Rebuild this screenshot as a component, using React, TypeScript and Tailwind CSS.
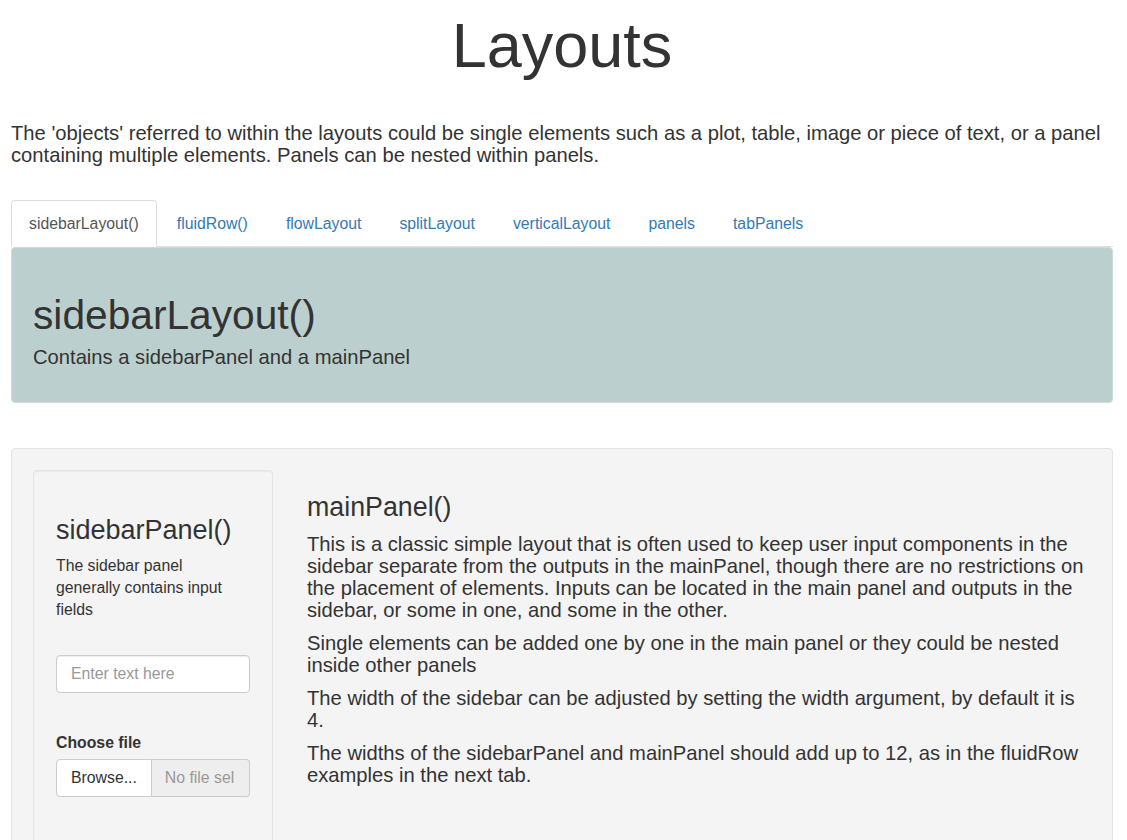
import { useState } from "react";

const TABS = [
  "sidebarLayout()",
  "fluidRow()",
  "flowLayout",
  "splitLayout",
  "verticalLayout",
  "panels",
  "tabPanels",
];

function Tabs({ active, onPick }: { active: number; onPick: (i: number) => void }) {
  return (
    <ul className="flex border-b border-[#ddd]">
      {TABS.map((t, i) => (
        <li key={t} className="-mb-px mr-[2px]">
          <button
            onClick={() => onPick(i)}
            className={`block px-[17px] pt-[12px] pb-[12px] text-[15.8px] leading-[21px] border rounded-t-[4px] ${
              i === active
                ? "bg-white text-[#555] border-[#ddd] border-b-white"
                : "text-[#337ab7] border-transparent hover:bg-[#eee]"
            }`}
          >
            {t}
          </button>
        </li>
      ))}
    </ul>
  );
}

function Sidebar() {
  return (
    <div className="w-[240px] shrink-0 bg-[#f4f4f4] border border-[#e3e3e3] rounded-[4px] px-[22px] pt-[44px] pb-[60px] shadow-[inset_0_1px_1px_rgba(0,0,0,0.05)]">
      <h3 className="text-[27px] leading-[30px]">sidebarPanel()</h3>
      <p className="mt-[10px] text-[15.8px] leading-[22px]">
        The sidebar panel generally contains input fields
      </p>
      <input
        type="text"
        placeholder="Enter text here"
        className="mt-[34px] w-full h-[38px] px-[14px] text-[15.8px] bg-white border border-[#ccc] rounded-[4px] placeholder:text-[#999] outline-none shadow-[inset_0_1px_1px_rgba(0,0,0,0.075)]"
      />
      <label className="block mt-[39px] font-bold text-[15.8px] leading-[22px]">Choose file</label>
      <div className="mt-[5px] flex h-[38px]">
        <span className="flex items-center px-[14px] bg-white border border-[#ccc] rounded-l-[4px] text-[15.8px]">
          Browse...
        </span>
        <span className="flex-1 min-w-0 flex items-center px-[13px] bg-[#eee] border border-l-0 border-[#ccc] rounded-r-[4px] text-[15.8px] text-[#999] overflow-hidden whitespace-nowrap">
          No file sel
        </span>
      </div>
    </div>
  );
}

export default function App() {
  const [active, setActive] = useState(0);

  return (
    <div className="min-h-screen bg-white text-[#333] font-['Liberation_Sans',Arial,sans-serif] pl-[11px] pr-[14px]">
      <h1 className="pt-[9px] text-center text-[63px] leading-[72px]">Layouts</h1>
      <p className="mt-[41px] text-[20.2px] leading-[22px]">
        The 'objects' referred to within the layouts could be single elements such as a plot, table, image or piece of
        text, or a panel containing multiple elements. Panels can be nested within panels.
      </p>

      <div className="mt-[34px]">
        <Tabs active={active} onPick={setActive} />
      </div>

      <div className="bg-[#bbd0ce] border border-[#cfdbda] rounded-[4px] px-[21px] pt-[45px] pb-[34px]">
        <h1 className="text-[40.7px] leading-[45px]">sidebarLayout()</h1>
        <p className="mt-[8px] text-[20.2px] leading-[22px]">Contains a sidebarPanel and a mainPanel</p>
      </div>

      <div className="mt-[45px] bg-[#f4f4f4] border border-[#e3e3e3] rounded-[4px] pl-[21px] pr-[27px] pt-[21px] pb-[21px] flex gap-[34px]">
        <Sidebar />
        <div className="flex-1 pt-[22px]">
          <h3 className="text-[26.8px] leading-[30px]">mainPanel()</h3>
          <div className="mt-[11px] text-[20.2px] leading-[22px] flex flex-col gap-[11px]">
            <p>
              This is a classic simple layout that is often used to keep user input components in the sidebar separate
              from the outputs in the mainPanel, though there are no restrictions on the placement of elements. Inputs
              can be located in the main panel and outputs in the sidebar, or some in one, and some in the other.
            </p>
            <p>Single elements can be added one by one in the main panel or they could be nested inside other panels</p>
            <p>The width of the sidebar can be adjusted by setting the width argument, by default it is 4.</p>
            <p>The widths of the sidebarPanel and mainPanel should add up to 12, as in the fluidRow examples in the next tab.</p>
          </div>
        </div>
      </div>
    </div>
  );
}
